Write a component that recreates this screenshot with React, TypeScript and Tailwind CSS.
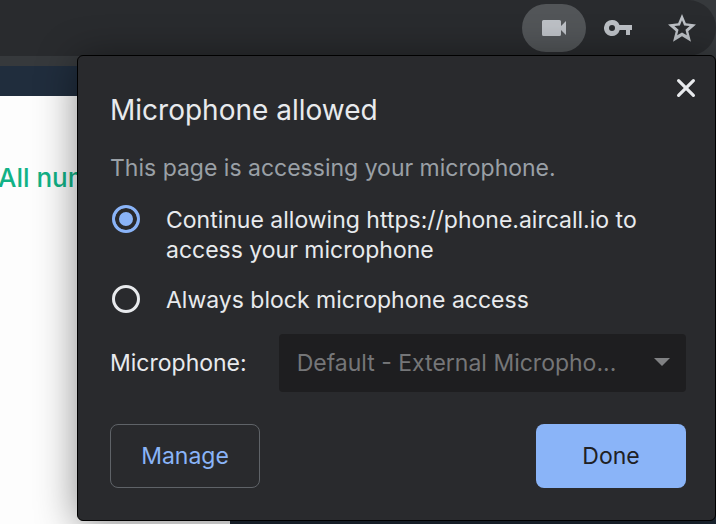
import { useState } from "react";
import { clsx } from "clsx";

const BUTTON_CLASS =
  "flex h-16 w-[150px] items-center justify-center rounded-lg";

const OPTIONS = [
  {
    id: "allow",
    label: "Continue allowing https://phone.aircall.io to access your microphone",
  },
  { id: "block", label: "Always block microphone access" },
];

function Toolbar() {
  return (
    <header className="bg-[#36393c] pb-[10px]">
      <div className="flex h-14 items-center justify-end rounded-r-[28px] bg-[#292b2e] text-[#bdc1c6]">
        <button
          type="button"
          aria-label="Camera and microphone"
          className="flex h-12 w-16 items-center justify-center rounded-full bg-[#525558]"
        >
          <svg viewBox="0 0 24 16" className="h-4 w-6" fill="currentColor" aria-hidden>
            <path d="M1.500 0h16A1.500 1.500 0 0 1 19 1.500V6l5-5v14l-5-5v4.500a1.500 1.500 0 0 1-1.500 1.500h-16A1.500 1.500 0 0 1 0 14.500v-13A1.500 1.500 0 0 1 1.500 0z" />
          </svg>
        </button>
        <button
          type="button"
          aria-label="Passwords"
          className="flex h-12 w-16 items-center justify-center"
        >
          <svg viewBox="0 0 28 16" className="h-4 w-7" fill="currentColor" aria-hidden>
            <path
              fillRule="evenodd"
              d="M8 0a8 8 0 0 1 7.500 5H28v5h-2v5h-4v-5h-6.300A8 8 0 1 1 8 0zM8 5a3 3 0 1 0 0 6 3 3 0 0 0 0-6z"
            />
          </svg>
        </button>
        <button
          type="button"
          aria-label="Bookmark"
          className="mr-0.5 flex h-12 w-16 items-center justify-center"
        >
          <svg viewBox="0 0 29 29" className="size-7" fill="currentColor" aria-hidden>
            <path
              fillRule="evenodd"
              d="M14.500 0l4 9.700 10.500 1.100-8 7 2.800 10.900-9.300-5.600-9.300 5.600L8 17.800l-8-7 10.500-1.100zM14.500 6.500l-2.200 5.400-5.700.6 4.300 3.800-1.400 5.800 5-3 5 3-1.400-5.800 4.300-3.800-5.700-.6z"
            />
          </svg>
        </button>
      </div>
    </header>
  );
}

function PermissionDialog() {
  const [choice, setChoice] = useState("allow");

  return (
    <section
      role="dialog"
      aria-labelledby="dialog-title"
      className="absolute top-[55px] right-0 left-[77px] rounded-md border border-black bg-[#292a2d] pt-4 pr-[29px] pb-8 pl-8 text-[23px] leading-[30px] text-[#e8eaed] shadow-[0_4px_40px_rgba(0,0,0,0.45)]"
    >
      <div className="flex items-start justify-between">
        <h1 id="dialog-title" className="mt-5 text-[28px] leading-9">
          Microphone allowed
        </h1>
        <button
          type="button"
          aria-label="Close"
          className="-mr-4 flex size-8 items-center justify-center"
        >
          <svg
            viewBox="0 0 20 20"
            className="size-5"
            fill="none"
            stroke="currentColor"
            strokeWidth="3.200"
            strokeLinecap="round"
            aria-hidden
          >
            <path d="M2.600 2.600l14.800 14.800M17.400 2.600L2.600 17.400" />
          </svg>
        </button>
      </div>

      <p className="mt-[25px] text-[#9aa0a6]">This page is accessing your microphone.</p>

      <fieldset className="mt-[22px] flex flex-col gap-5">
        {OPTIONS.map((option) => (
          <div key={option.id} className="flex items-start gap-[26px] pl-0.5">
            <input
              id={option.id}
              type="radio"
              name="permission"
              checked={choice === option.id}
              onChange={() => setChoice(option.id)}
              className={clsx(
                "size-7 shrink-0 appearance-none rounded-full border-3",
                choice === option.id
                  ? "border-[#8ab4f8] bg-[#8ab4f8] shadow-[inset_0_0_0_4px_#292a2d]"
                  : "border-[#e8eaed]",
              )}
            />
            <label htmlFor={option.id}>{option.label}</label>
          </div>
        ))}
      </fieldset>

      <div className="mt-[19px] flex items-center gap-8">
        <label htmlFor="device" className="shrink-0">
          Microphone:
        </label>
        <div className="relative min-w-0 flex-1">
          <select
            id="device"
            disabled
            className="h-[58px] w-full appearance-none truncate rounded-sm bg-[#1e1e20] pr-14 pl-[18px] text-[#757678] opacity-100"
          >
            <option>Default - External Micropho...</option>
          </select>
          <svg
            viewBox="0 0 16 8"
            className="pointer-events-none absolute top-6 right-4 h-2 w-4"
            fill="#808183"
            aria-hidden
          >
            <path d="M0 0h16L8 8z" />
          </svg>
        </div>
      </div>

      <div className="mt-8 flex justify-between">
        <button
          type="button"
          className={clsx(BUTTON_CLASS, "border border-[#5f6368] text-[#8ab4f8]")}
        >
          Manage
        </button>
        <button type="button" className={clsx(BUTTON_CLASS, "bg-[#8ab4f8] text-[#202124]")}>
          Done
        </button>
      </div>
    </section>
  );
}

export default function App() {
  return (
    <div className="relative flex min-h-screen flex-col overflow-hidden font-['Inter',sans-serif]">
      <Toolbar />
      <div className="h-[30px] bg-[#202d3d]" />
      <main className="flex flex-1 bg-[#1c2733]">
        <div className="w-[230px] bg-[#fdfdfd] pt-16">
          <p className="-ml-0.5 text-[26px] leading-9 font-medium text-[#12b286]">All num</p>
        </div>
      </main>
      <PermissionDialog />
    </div>
  );
}
